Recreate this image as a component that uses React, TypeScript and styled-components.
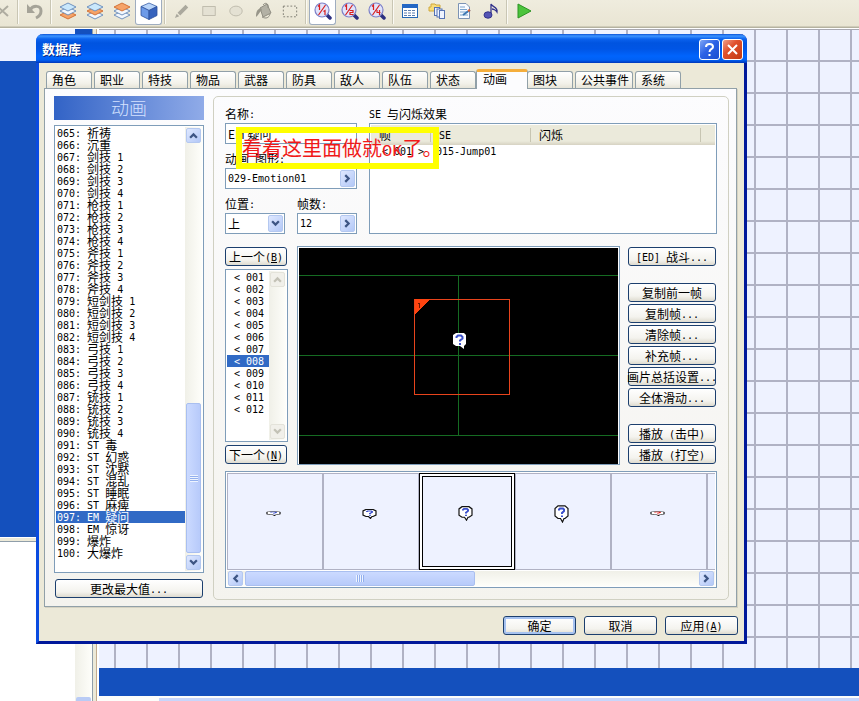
import React from "react";
import styled, { createGlobalStyle, css } from "styled-components";

const GlobalStyle = createGlobalStyle`
  *, *::before, *::after { box-sizing: border-box; }
  body {
    margin: 0;
    background: #fff;
    color: #000;
    font: 12px/12px "Noto Sans CJK SC", "Liberation Sans", sans-serif;
  }
  button, input, select { font: inherit; color: inherit; margin: 0; padding: 0; }
  ul { list-style: none; margin: 0; padding: 0; }
`;

/* ---------- text ---------- */

const Latin = styled.span`
  font-family: "DejaVu Sans Mono", "Liberation Mono", monospace;
  font-size: 10px;
  line-height: 10px;
  vertical-align: 1px;
  white-space: pre;
`;

/** Sets Latin runs in a half-width face beside full-width Chinese. */
function Txt({ children }: { children: string }) {
  return (
    <>
      {children
        .split(/([\x20-\x7e]+)/)
        .filter(Boolean)
        .map((run, i) => (/^[\x20-\x7e]/.test(run) ? <Latin key={i}>{run}</Latin> : run))}
    </>
  );
}

/* ---------- editor window ---------- */

const Page = styled.div`
  position: relative;
  display: flex;
  flex-direction: column;
  min-height: 100vh;
  overflow: hidden;
`;

const Toolbar = styled.div`
  display: flex;
  height: 29px;
  padding-left: 15px;
  overflow: hidden;
  background: linear-gradient(#efecde, #e9e5d3 26px, #b5b29f 27px, #b5b29f 28px, #fff 28px);
`;

const Tool = styled.button<{ $on?: boolean }>`
  display: flex;
  align-items: center;
  justify-content: center;
  flex: none;
  width: 27px;
  height: 25px;
  padding-bottom: 2px;
  border: 1px solid transparent;
  border-top: 0;
  border-radius: 0 0 3px 3px;
  background: none;
  ${(p) => p.$on && css`background: #fff; border-color: #9fadc0;`}
`;

const CutTool = styled(Tool)`
  margin-left: -27px;
`;

const Divider = styled.span`
  flex: none;
  width: 2px;
  height: 24px;
  margin: 0 2px;
  border-left: 1px solid #c9c6b4;
  border-right: 1px solid #fbfaf4;
`;

const Workspace = styled.div`
  flex: 1;
  display: grid;
  grid-template-columns: 92px 7px 1fr;
`;

const Side = styled.div`
  display: flex;
  flex-direction: column;
`;

const Tileset = styled.div`
  height: 508px;
  background: linear-gradient(#eef2ff, #eef2ff) 0 0 / 75px 32px no-repeat, #1450bd;
`;

const SideSplit = styled.div`
  height: 5px;
  background: #ece9d8;
  border-top: 1px solid #fff;
  border-bottom: 1px solid #8f9eaa;
`;

const MapTree = styled.div`
  flex: 1;
  display: flex;
  flex-direction: column;
  justify-content: flex-end;
  align-items: flex-end;
  background: linear-gradient(90deg, #f0f0e8, #fefefa) right / 17px 100% no-repeat, #fff;
`;

const ThumbStub = styled.span`
  width: 15px;
  height: 4px;
  margin-right: 1px;
  border-radius: 2px 2px 0 0;
  background: #b9cbf5;
`;

const Splitter = styled.div`
  background: #ece9d8;
  border-left: 1px solid #8f9eaa;
  border-right: 2px solid #fff;
  box-shadow: inset -1px 0 #c2ab8e;
`;

const MapPane = styled.div`
  display: flex;
  flex-direction: column;
`;

const MapGrid = styled.div`
  flex: 1;
  border-top: 1px solid #a8a8b0;
  background:
    linear-gradient(90deg, #b0b2c4 2px, transparent 2px) 15px 0 / 32px 32px,
    linear-gradient(#b0b2c4 2px, transparent 2px) 0 30px / 32px 32px,
    #eef2ff;
`;

const MapBlue = styled.div`
  height: 28px;
  background: #1450bd;
`;

const MapScroll = styled.div`
  height: 5px;
  padding: 2px 0 0 60px;
  background: #fdfdfa;
  &::before { content: ""; display: block; height: 3px; background: #c8d6fb; }
`;

/* ---------- dialog ---------- */

const Dialog = styled.section`
  position: absolute;
  top: 34px;
  left: 36px;
  right: 112px;
  border: solid #0831b5;
  border-width: 0 3px 3px;
  border-left-color: #0a4be0;
  border-right-color: #00189a;
  border-bottom-color: #00189a;
  border-radius: 7px 7px 0 0;
  background: #ece9d8;
`;

const TitleBar = styled.header`
  display: flex;
  align-items: center;
  gap: 2px;
  height: 29px;
  margin: 0 -3px;
  padding: 1px 4px 0 6px;
  border-radius: 7px 7px 0 0;
  background: linear-gradient(#0a52d6, #3c94ff 2px, #0a62ee 5px, #0054e0 9px, #0055e5 15px, #0064fd 22px, #0060f4 26px, #0036b8);
`;

const Title = styled.h1`
  flex: 1;
  margin: 0;
  color: #fff;
  font-size: 13px;
  line-height: 16px;
  font-weight: 700;
  text-shadow: 1px 1px #0a2a80;
`;

const Caption = styled.button<{ $close?: boolean }>`
  display: flex;
  align-items: center;
  justify-content: center;
  width: 21px;
  height: 21px;
  border: 1px solid #fff;
  border-radius: 3px;
  background: ${(p) =>
    p.$close
      ? "linear-gradient(135deg, #f0a08a, #e0502c 40%, #c23a12)"
      : "linear-gradient(135deg, #7fa5f5, #2c62e6 45%, #1a4ed0)"};
`;

const Tabs = styled.div`
  display: flex;
  align-items: flex-end;
  gap: 2px;
  height: 25px;
  padding-left: 7px;
`;

const Tab = styled.button<{ $active?: boolean; $wide?: boolean }>`
  width: ${(p) => (p.$wide ? 58 : 46)}px;
  height: 17px;
  padding: 0 0 0 5px;
  border: 1px solid #91a0a8;
  border-bottom: 0;
  border-radius: 3px 3px 0 0;
  background: linear-gradient(#fff, #f3f2ea 70%, #e6e4d8);
  text-align: left;
  white-space: nowrap;
  ${(p) =>
    p.$active &&
    css`
      z-index: 1;
      width: 52px;
      height: 20px;
      margin: 0 -3px -1px -2px;
      padding: 0 0 3px 6px;
      border-top: 3px solid #f5ae3c;
      background: #fcfcfe;
    `}
`;

const Pane = styled.div`
  display: grid;
  grid-template-columns: 150px 1fr;
  gap: 9px;
  margin: 0 7px 0 5px;
  padding: 7px 7px 6px 9px;
  border: 1px solid #91a0a8;
  box-shadow: 1px 1px #d5d2c2;
  background: linear-gradient(#fcfcfe, #f4f3ee);
`;

const ListColumn = styled.div`
  display: flex;
  flex-direction: column;
`;

const Banner = styled.h2`
  margin: 0 0 5px;
  height: 24px;
  background: linear-gradient(90deg, #3263c6, #90abe8);
  color: #d5e2ff;
  font-size: 18px;
  line-height: 22px;
  font-weight: 300;
  text-align: center;
`;

const ListBox = styled.div`
  display: flex;
  border: 1px solid #7f9db9;
  background: #fff;
  padding: 1px;
`;

const DataBox = styled(ListBox)`
  height: 448px;
  margin-bottom: 6px;
`;

const Options = styled.ul`
  flex: 1;
  min-width: 0;
`;

const Option = styled.li<{ $on?: boolean; $inset?: boolean }>`
  height: 12px;
  padding-left: ${(p) => (p.$inset ? 7 : 1)}px;
  line-height: 12px;
  white-space: nowrap;
  ${(p) => p.$on && css`background: #316ac5; color: #fff;`}
`;

const Button = styled.button<{ $default?: boolean }>`
  display: flex;
  align-items: center;
  justify-content: center;
  height: 19px;
  border: 1px solid #1c3f6e;
  border-radius: 3px;
  background: linear-gradient(#fff, #f4f3ee 70%, #dedbcf);
  white-space: nowrap;
  ${(p) => p.$default && css`box-shadow: inset 0 0 0 2px #a6c2f0;`}
`;

const ListButton = styled(Button)`
  margin: 0 1px;
`;

const Bar = styled.div<{ $row?: boolean }>`
  display: flex;
  flex-direction: ${(p) => (p.$row ? "row" : "column")};
  flex: none;
  gap: 2px;
  padding: ${(p) => (p.$row ? "0 1px" : "1px")};
  ${(p) => (p.$row ? "height: 15px;" : "width: 17px;")}
  background: linear-gradient(${(p) => (p.$row ? "180deg" : "90deg")}, #f0f0e8, #fefefa);
`;

const ArrowButton = styled.button<{ $off?: boolean }>`
  display: flex;
  align-items: center;
  justify-content: center;
  flex: none;
  width: 15px;
  height: 15px;
  border: 1px solid ${(p) => (p.$off ? "#e4e3da" : "#b4c8f0")};
  border-radius: 2px;
  color: ${(p) => (p.$off ? "#c3c2b6" : "#3d5584")};
  background: ${(p) => (p.$off ? "#f1f0ea" : "linear-gradient(135deg, #dfe8ff, #b3c8f7)")};
`;

const FieldArrow = styled(ArrowButton)`
  height: 17px;
`;

const Thumb = styled.div<{ $row?: boolean }>`
  display: flex;
  align-items: center;
  justify-content: center;
  flex: none;
  ${(p) => (p.$row ? "width: 230px; height: 15px;" : "width: 15px; height: 150px;")}
  border: 1px solid #a9bff0;
  border-radius: 2px;
  background: linear-gradient(${(p) => (p.$row ? "180deg" : "90deg")}, #cbdaff, #b7cafa);
`;

const Grip = styled.span<{ $row?: boolean }>`
  width: 8px;
  height: 7px;
  background: repeating-linear-gradient(${(p) => (p.$row ? "90deg" : "180deg")}, #eef4ff 0 1px, #93b0ee 1px 2px);
`;

const Gap = styled.span`
  flex: 1;
`;

const Group = styled.div`
  position: relative;
  display: flex;
  flex-direction: column;
  min-width: 0;
  padding: 11px;
  border: 1px solid #d0d0c2;
  border-radius: 5px;
`;

const TopRow = styled.div`
  display: grid;
  grid-template-columns: 132px 1fr;
  column-gap: 12px;
  margin-bottom: 12px;
`;

const Fields = styled.div`
  display: grid;
  grid-template-columns: 60px 60px;
  gap: 9px 12px;
  align-content: start;
`;

const Field = styled.div<{ $full?: boolean }>`
  display: flex;
  flex-direction: column;
  gap: 3px;
  min-width: 0;
  ${(p) => p.$full && "grid-column: 1 / -1;"}
`;

const FieldLabel = styled.label`
  height: 12px;
  white-space: nowrap;
`;

const Box = styled.div`
  display: flex;
  align-items: center;
  height: 21px;
  padding: 1px 1px 1px 2px;
  border: 1px solid #7f9db9;
  background: #fff;
`;

const TextInput = styled.input<{ $latin?: boolean }>`
  flex: 1;
  min-width: 0;
  width: 0;
  height: 17px;
  border: 0;
  outline: 0;
  background: none;
  ${(p) => p.$latin && css`font: 10px/17px "DejaVu Sans Mono", "Liberation Mono", monospace;`}
`;

const Select = styled.select`
  flex: 1;
  min-width: 0;
  width: 0;
  height: 17px;
  border: 0;
  outline: 0;
  appearance: none;
  background: none;
`;

const SeSection = styled.div`
  display: flex;
  flex-direction: column;
  gap: 3px;
  min-width: 0;
`;

const SeBox = styled.div`
  flex: 1;
  padding: 1px;
  border: 1px solid #7f9db9;
  background: #fff;
`;

const SeTable = styled.table`
  width: 100%;
  border-collapse: collapse;
  table-layout: fixed;
`;

const Th = styled.th`
  height: 20px;
  padding: 0 0 0 8px;
  background: linear-gradient(90deg, #c7c5b2, #c7c5b2) right center / 1px 14px no-repeat, linear-gradient(#ebeadb 16px, #d6d2c2);
  font-weight: 400;
  text-align: left;
`;

const ThEnd = styled(Th)`
  background: linear-gradient(#ebeadb 16px, #d6d2c2);
`;

const Td = styled.td`
  height: 12px;
  padding: 0 0 0 5px;
  white-space: nowrap;
`;

const FrameCell = styled(Td)`
  padding-left: 11px;
`;

const Col = styled.col<{ $w?: number }>`
  ${(p) => p.$w && `width: ${p.$w}px;`}
`;

const Note = styled.div`
  position: absolute;
  top: 30px;
  left: 22px;
  width: 203px;
  height: 42px;
  border: 6px solid #ff0;
  color: #f01818;
  font-size: 20px;
  line-height: 30px;
  white-space: nowrap;
`;

const NoteLatin = styled.span`
  font-family: "Liberation Mono", monospace;
  font-size: 17px;
`;

const MidRow = styled.div`
  display: grid;
  grid-template-columns: 64px 1fr 89px;
  grid-template-rows: 219px;
  column-gap: 8px;
  margin-bottom: 6px;
`;

const FrameColumn = styled.div`
  display: flex;
  flex-direction: column;
  gap: 3px;
  padding: 1px 1px 1px 0;
`;

const FrameButton = styled(Button)`
  margin-right: 1px;
`;

const FrameBox = styled(ListBox)`
  flex: 1;
`;

const Stage = styled.div`
  min-width: 0;
  border: 1px solid #7f9db9;
  padding: 1px 1px 0;
  background: #fff;
  svg { display: block; width: 100%; height: 216px; background: #000; }
`;

const Actions = styled.div`
  display: flex;
  flex-direction: column;
  gap: 17px;
  padding: 1px 1px 0 0;
`;

const ActionGroup = styled.div`
  display: flex;
  flex-direction: column;
  gap: 2px;
`;

const Strip = styled.div`
  height: 117px;
  padding: 1px;
  border: 1px solid #7f9db9;
  background: #fff;
`;

const Cells = styled.div`
  display: flex;
  height: 97px;
  margin-bottom: 1px;
  overflow: hidden;
  background:
    linear-gradient(#b0b2c4, #b0b2c4) top / 100% 1px no-repeat,
    linear-gradient(#b0b2c4, #b0b2c4) bottom / 100% 1px no-repeat,
    #eef2ff;
`;

const Cell = styled.div<{ $on?: boolean }>`
  display: flex;
  align-items: center;
  justify-content: center;
  flex: none;
  width: 96px;
  height: 97px;
  padding: 0 4px 16px 0;
  border: 1px solid #b0b2c4;
  ${(p) =>
    p.$on &&
    css`
      border-color: #000;
      box-shadow: inset 0 0 0 2px #fff, inset 0 0 0 3px #000;
    `}
`;

const Footer = styled.footer`
  display: flex;
  justify-content: flex-end;
  gap: 8px;
  padding: 9px 6px 6px;
`;

const FootButton = styled(Button)`
  width: 73px;
`;

/* ---------- drawings ---------- */

const arrows = { up: "M1 6 4 3 7 6", down: "M1 2 4 5 7 2", left: "M6 1 3 4 6 7", right: "M2 1 5 4 2 7" };

function Arrow({ to }: { to: keyof typeof arrows }) {
  return (
    <svg width="9" height="9" viewBox="0 0 8 8">
      <path d={arrows[to]} fill="none" stroke="currentColor" strokeWidth="2" />
    </svg>
  );
}

function Icon({ children, size = 18 }: { children: React.ReactNode; size?: number }) {
  return (
    <svg width={size} height={size} viewBox="0 0 18 18" fill="none">
      {children}
    </svg>
  );
}

function Layers({ hot }: { hot: number }) {
  return (
    <Icon>
      {[2, 1, 0].map((n) => (
        <path
          key={n}
          d={`M9 ${1 + n * 4} 17 ${5 + n * 4} 9 ${9 + n * 4} 1 ${5 + n * 4}Z`}
          fill={n === hot ? "#f6a368" : n === 0 ? "#c9e8fc" : "#f2f7fd"}
          stroke={n === hot ? "#cf6a2c" : "#6488b8"}
          strokeWidth="0.9"
        />
      ))}
    </Icon>
  );
}

function Cube() {
  return (
    <Icon>
      <path d="M9 1 17 4.500 9 8.500 1 4.500Z" fill="#b8d4fa" stroke="#3a5fa8" strokeWidth="0.8" />
      <path d="M1 4.500 9 8.500V17.500L1 13.500Z" fill="#6d9ae8" stroke="#2f519c" strokeWidth="0.8" />
      <path d="M17 4.500 9 8.500V17.500L17 13.500Z" fill="#3763bd" stroke="#2f519c" strokeWidth="0.8" />
    </Icon>
  );
}

function Magnifier({ bottom }: { bottom: string }) {
  return (
    <Icon>
      <path d="M13 13 16 16" stroke="#2c2f80" strokeWidth="3.500" strokeLinecap="round" />
      <circle cx="8" cy="8" r="7" fill="#e2e4fb" stroke="#7c80c8" strokeWidth="1.200" />
      <path d="M4.500 13 11.500 3M4 4.500 5.500 3V8" stroke="#d82020" strokeWidth="1.200" />
      <path d={bottom} stroke="#d82020" strokeWidth="1.200" />
    </Icon>
  );
}

function Bubble({ h, red }: { h: number; red?: boolean }) {
  return (
    <svg width="15" height={h} viewBox="0 0 15 18" preserveAspectRatio="none">
      <path
        d="M4 .8H11L14 3.500V11L11 13.500H10L8.500 17 6.500 13.500H4L1 11V3.500Z"
        fill="#fff"
        stroke="#111"
        strokeWidth="1.200"
        vectorEffect={h < 10 ? undefined : "non-scaling-stroke"}
      />
      <path
        d="M5 5.500V4.500L6 3.500H9L10 4.500V6L8 8V9M8 10.500V12"
        fill="none"
        stroke={red ? "#e02020" : "#3b50cc"}
        strokeWidth="2"
      />
    </svg>
  );
}

function StageDrawing() {
  return (
    <svg viewBox="0 0 319 216" preserveAspectRatio="xMidYMid meet" shapeRendering="crispEdges">
      <path d="M-999 27.500H1999M-999 107.500H1999M-999 187.500H1999M159.500 27V188" stroke="#156b22" fill="none" />
      <rect x="115.500" y="51.500" width="95" height="95" fill="none" stroke="#e8441c" />
      <path d="M116 51H131L116 66Z" fill="#ff4410" />
      <path d="M119 55.500H120.500V60" stroke="#6b1500" fill="none" />
      <g shapeRendering="auto">
        <path d="M157 85H165L167 87V96L165 98V101L161 98H157L154 96V87Z" fill="#fff" />
        <path d="M157.500 90V89L159 87.500H162L163.500 89V90.500L161 92.500V93.500M161 95V97" stroke="#3b50cc" strokeWidth="2" fill="none" />
      </g>
    </svg>
  );
}

function EditorToolbar() {
  return (
    <Toolbar>
      <CutTool aria-label="删除">
        <Icon><path d="M4 4 15 14M15 4 4 14" stroke="#aeaca0" strokeWidth="2" /></Icon>
      </CutTool>
      <Divider />
      <Tool aria-label="撤销">
        <Icon>
          <path d="M4 8C7 3 15 3 15 9 15 13 12 15 10 16" stroke="#a5a398" strokeWidth="3" />
          <path d="M1 2V11H9Z" fill="#a5a398" />
        </Icon>
      </Tool>
      <Divider />
      <Tool aria-label="第一层"><Layers hot={2} /></Tool>
      <Tool aria-label="第二层"><Layers hot={1} /></Tool>
      <Tool aria-label="第三层"><Layers hot={0} /></Tool>
      <Tool aria-label="事件层" $on><Cube /></Tool>
      <Divider />
      <Tool aria-label="铅笔">
        <Icon size={16}><path d="M13 2 16 5 7 14 4 11ZM3 12 6 15 1 17Z" fill="#aaa89d" /></Icon>
      </Tool>
      <Tool aria-label="矩形">
        <Icon size={16}><rect x="2" y="4" width="14" height="10" fill="#e4e1d3" stroke="#bbb8a9" /></Icon>
      </Tool>
      <Tool aria-label="椭圆">
        <Icon size={16}><ellipse cx="9" cy="9" rx="7" ry="5.500" fill="#e4e1d3" stroke="#bbb8a9" /></Icon>
      </Tool>
      <Tool aria-label="填充">
        <Icon>
          <path d="M6 6 13 2 17 11 9 15Z" fill="#b3b1a5" stroke="#8f8d82" />
          <path d="M7 6C3 7 2 10 2 15 5 13 5 10 8 8" fill="#98968a" />
          <path d="M9 3C11 0 15 1 14 6M8 15C12 17 15 16 16 12" stroke="#8f8d82" />
        </Icon>
      </Tool>
      <Tool aria-label="选择">
        <Icon size={16}><rect x="1.500" y="3.500" width="15" height="12" stroke="#77756b" strokeDasharray="2 2" /></Icon>
      </Tool>
      <Divider />
      <Tool aria-label="1/1" $on><Magnifier bottom="M9.500 9.500 11 8.500V13" /></Tool>
      <Tool aria-label="1/2"><Magnifier bottom="M8.500 8.500H12V10.500H9V12.500H12.500" /></Tool>
      <Tool aria-label="1/4"><Magnifier bottom="M9 8V10.500H12.500M11.500 8V13" /></Tool>
      <Divider />
      <Tool aria-label="数据库">
        <Icon>
          <rect x="1.500" y="2.500" width="15" height="13" fill="#fff" stroke="#2467b4" />
          <path d="M1 2H17V6H1Z" fill="#2467c4" />
          <path d="M3 8.500H15M3 11H15M3 13.500H15" stroke="#5c7fb0" strokeWidth="1.200" strokeDasharray="3 1" />
        </Icon>
      </Tool>
      <Tool aria-label="素材管理">
        <Icon>
          <path d="M1 5H3V2H7L8 3H12V9H1Z" fill="#f8dc78" stroke="#cfa83c" />
          <rect x="6.500" y="5.500" width="5" height="8" fill="#eef3ff" stroke="#5573b4" />
          <rect x="9" y="7" width="5" height="8" fill="#eef3ff" stroke="#5573b4" />
          <rect x="11.500" y="8.500" width="5" height="8" fill="#eef3ff" stroke="#5573b4" />
        </Icon>
      </Tool>
      <Tool aria-label="脚本编辑器">
        <Icon>
          <path d="M3.500 1.500H11L14.500 5V16.500H3.500Z" fill="#f8fbff" stroke="#7c93b4" />
          <path d="M5 5H10M5 7.500H12M5 10H12M5 13H13" stroke="#7aa3cc" />
          <path d="M8 13 15 8" stroke="#3c78b4" strokeWidth="2" />
          <path d="M13 9 15 8" stroke="#e06030" strokeWidth="2" />
        </Icon>
      </Tool>
      <Tool aria-label="声音测试">
        <Icon>
          <path d="M9 13V2C10 5 16 5 15 10 14 8 11 7 10 7" stroke="#34348c" strokeWidth="1.300" />
          <ellipse cx="6" cy="13" rx="4" ry="3.200" fill="#5454b4" stroke="#34348c" />
        </Icon>
      </Tool>
      <Divider />
      <Tool aria-label="测试运行">
        <Icon><path d="M3 2 16 9 3 16Z" fill="#4cc43c" stroke="#2c9424" /></Icon>
      </Tool>
    </Toolbar>
  );
}

/* ---------- data ---------- */

const tabs = ["角色", "职业", "特技", "物品", "武器", "防具", "敌人", "队伍", "状态", "动画", "图块", "公共事件", "系统"];

const animations = [
  "祈祷", "沉重",
  "剑技 1", "剑技 2", "剑技 3", "剑技 4",
  "枪技 1", "枪技 2", "枪技 3", "枪技 4",
  "斧技 1", "斧技 2", "斧技 3", "斧技 4",
  "短剑技 1", "短剑技 2", "短剑技 3", "短剑技 4",
  "弓技 1", "弓技 2", "弓技 3", "弓技 4",
  "铳技 1", "铳技 2", "铳技 3", "铳技 4",
  "ST 毒", "ST 幻惑", "ST 沈黙", "ST 混乱", "ST 睡眠", "ST 麻痺",
  "EM 疑问", "EM 惊讶", "爆炸", "大爆炸",
].map((name, i) => ({ id: String(65 + i).padStart(3, "0"), name }));

const frames = Array.from({ length: 12 }, (_, i) => String(i + 1).padStart(3, "0"));

const actionGroups = [
  ["[ED] 战斗..."],
  ["复制前一帧", "复制帧...", "清除帧...", "补充帧...", "画片总括设置...", "全体滑动..."],
  ["播放 (击中)", "播放 (打空)"],
];

export default function App() {
  return (
    <>
      <GlobalStyle />
      <Page>
        <EditorToolbar />
        <Workspace>
          <Side>
            <Tileset />
            <SideSplit />
            <MapTree><ThumbStub /></MapTree>
          </Side>
          <Splitter />
          <MapPane>
            <MapGrid />
            <MapBlue />
            <MapScroll />
          </MapPane>
        </Workspace>

        <Dialog role="dialog" aria-labelledby="dlg-title">
          <TitleBar>
            <Title id="dlg-title">数据库</Title>
            <Caption aria-label="帮助">
              <svg width="13" height="15" viewBox="0 0 13 15" fill="none">
                <path d="M3 5C3 1 10 1 10 5 10 7 6.500 7 6.500 10M6.500 12V14" stroke="#fff" strokeWidth="2" />
              </svg>
            </Caption>
            <Caption $close aria-label="关闭">
              <svg width="13" height="13" viewBox="0 0 13 13">
                <path d="M2 2 11 11M11 2 2 11" stroke="#fff" strokeWidth="2" />
              </svg>
            </Caption>
          </TitleBar>

          <Tabs role="tablist">
            {tabs.map((t) => (
              <Tab key={t} role="tab" aria-selected={t === "动画"} $active={t === "动画"} $wide={t.length > 2}>
                {t}
              </Tab>
            ))}
          </Tabs>

          <Pane role="tabpanel">
            <ListColumn>
              <Banner>动画</Banner>
              <DataBox>
                <Options role="listbox" aria-label="动画">
                  {animations.map((a) => (
                    <Option key={a.id} role="option" aria-selected={a.id === "097"} $on={a.id === "097"}>
                      <Txt>{`${a.id}: ${a.name}`}</Txt>
                    </Option>
                  ))}
                </Options>
                <Bar>
                  <ArrowButton aria-label="向上"><Arrow to="up" /></ArrowButton>
                  <Gap />
                  <Thumb><Grip /></Thumb>
                  <ArrowButton aria-label="向下"><Arrow to="down" /></ArrowButton>
                </Bar>
              </DataBox>
              <ListButton><span><Txt>更改最大值...</Txt></span></ListButton>
            </ListColumn>

            <Group>
              <TopRow>
                <Fields>
                  <Field $full>
                    <FieldLabel htmlFor="name"><Txt>名称:</Txt></FieldLabel>
                    <Box><TextInput id="name" defaultValue="EM 疑问" /></Box>
                  </Field>
                  <Field $full>
                    <FieldLabel htmlFor="graphic"><Txt>动画 图形:</Txt></FieldLabel>
                    <Box>
                      <TextInput id="graphic" $latin defaultValue="029-Emotion01" />
                      <FieldArrow aria-label="选择图形"><Arrow to="right" /></FieldArrow>
                    </Box>
                  </Field>
                  <Field>
                    <FieldLabel htmlFor="position"><Txt>位置:</Txt></FieldLabel>
                    <Box>
                      <Select id="position" defaultValue="上"><option>上</option><option>中</option><option>下</option></Select>
                      <FieldArrow as="span"><Arrow to="down" /></FieldArrow>
                    </Box>
                  </Field>
                  <Field>
                    <FieldLabel htmlFor="count"><Txt>帧数:</Txt></FieldLabel>
                    <Box>
                      <TextInput id="count" $latin defaultValue="12" />
                      <FieldArrow aria-label="更改帧数"><Arrow to="right" /></FieldArrow>
                    </Box>
                  </Field>
                </Fields>

                <SeSection>
                  <FieldLabel as="div" id="se-label"><Txt>SE 与闪烁效果</Txt></FieldLabel>
                  <SeBox>
                    <SeTable aria-labelledby="se-label">
                      <colgroup><Col $w={60} /><Col $w={100} /><Col /><Col $w={14} /></colgroup>
                      <thead>
                        <tr><Th>帧</Th><Th><Txt>SE</Txt></Th><Th>闪烁</Th><ThEnd aria-hidden="true" /></tr>
                      </thead>
                      <tbody>
                        <tr><FrameCell><Txt>{"< 001 >"}</Txt></FrameCell><Td><Txt>015-Jump01</Txt></Td><Td /><Td /></tr>
                      </tbody>
                    </SeTable>
                  </SeBox>
                </SeSection>
              </TopRow>

              <MidRow>
                <FrameColumn>
                  <FrameButton><span>上一个<Latin>(<u>B</u>)</Latin></span></FrameButton>
                  <FrameBox>
                    <Options role="listbox" aria-label="帧">
                      {frames.map((f) => (
                        <Option key={f} role="option" aria-selected={f === "008"} $on={f === "008"} $inset>
                          <Txt>{`< ${f}`}</Txt>
                        </Option>
                      ))}
                    </Options>
                    <Bar>
                      <ArrowButton $off disabled aria-label="向上"><Arrow to="up" /></ArrowButton>
                      <Gap />
                      <ArrowButton $off disabled aria-label="向下"><Arrow to="down" /></ArrowButton>
                    </Bar>
                  </FrameBox>
                  <FrameButton><span>下一个<Latin>(<u>N</u>)</Latin></span></FrameButton>
                </FrameColumn>
                <Stage><StageDrawing /></Stage>
                <Actions>
                  {actionGroups.map((g) => (
                    <ActionGroup key={g[0]}>
                      {g.map((label) => (
                        <Button key={label}><span><Txt>{label}</Txt></span></Button>
                      ))}
                    </ActionGroup>
                  ))}
                </Actions>
              </MidRow>

              <Strip>
                <Cells>
                  <Cell><Bubble h={5} /></Cell>
                  <Cell><Bubble h={10} /></Cell>
                  <Cell $on><Bubble h={15} /></Cell>
                  <Cell><Bubble h={18} /></Cell>
                  <Cell><Bubble h={5} red /></Cell>
                  <Cell />
                </Cells>
                <Bar $row>
                  <ArrowButton aria-label="向左"><Arrow to="left" /></ArrowButton>
                  <Thumb $row><Grip $row /></Thumb>
                  <Gap />
                  <ArrowButton aria-label="向右"><Arrow to="right" /></ArrowButton>
                </Bar>
              </Strip>

              <Note>看着这里面做就<NoteLatin>OK</NoteLatin>了。</Note>
            </Group>
          </Pane>

          <Footer>
            <FootButton $default>确定</FootButton>
            <FootButton>取消</FootButton>
            <FootButton><span>应用<Latin>(<u>A</u>)</Latin></span></FootButton>
          </Footer>
        </Dialog>
      </Page>
    </>
  );
}
